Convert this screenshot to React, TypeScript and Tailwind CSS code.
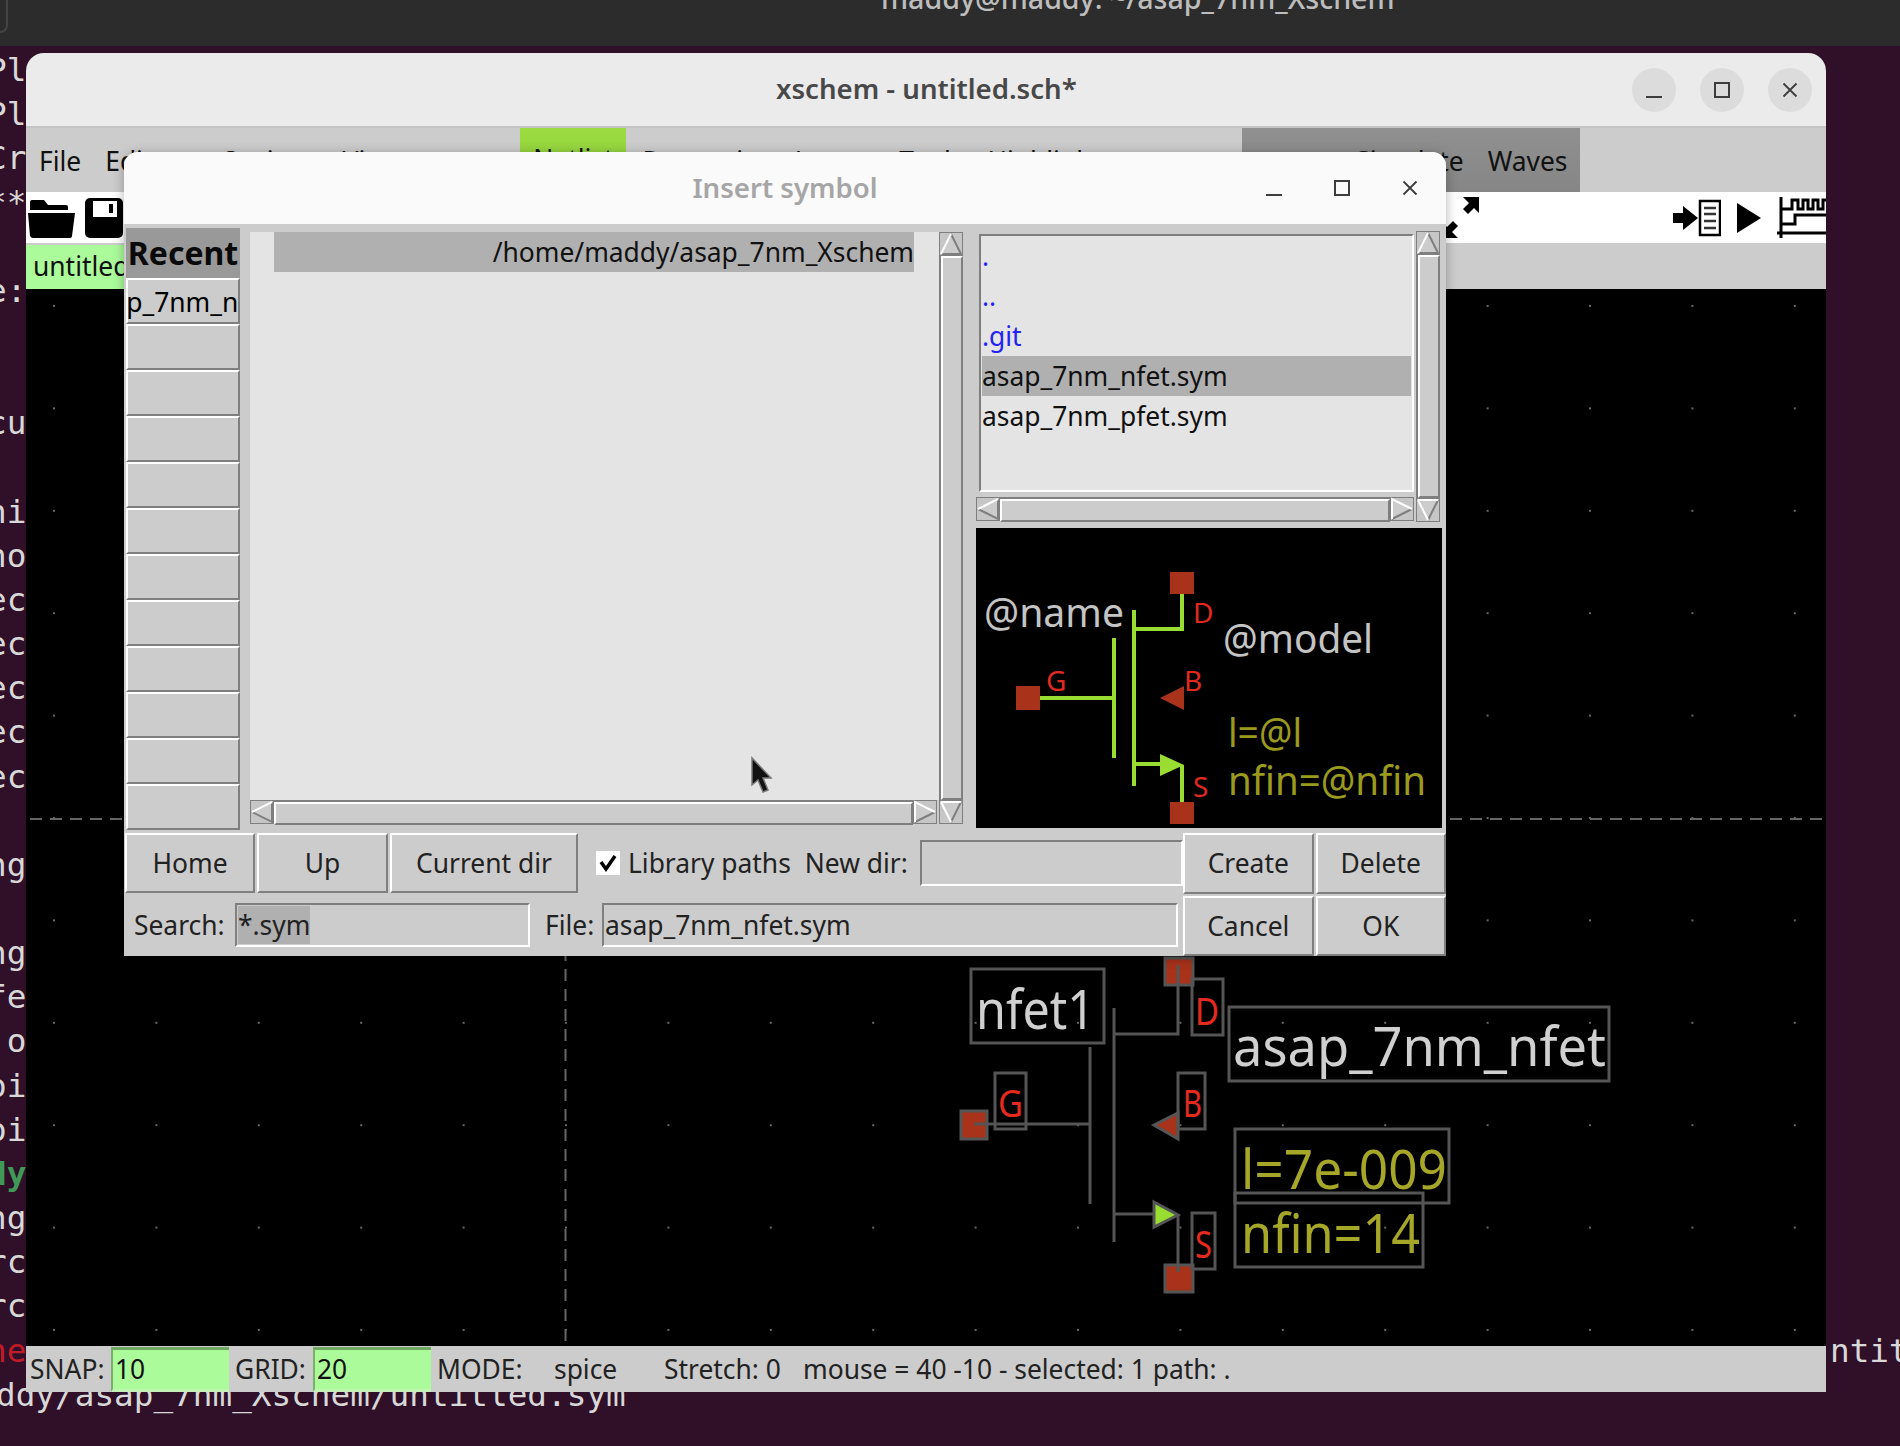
const raised = 'border-2 border-t-white border-l-white border-r-[#7f7f7f] border-b-[#7f7f7f]'
const sunken = 'border-2 border-t-[#7f7f7f] border-l-[#7f7f7f] border-r-white border-b-white'
const sans = 'font-["Noto_Sans",sans-serif]'

const terminalLines = [
  'Pl', 'Pl', 'Cr', '**', '', 'e:', '', '', 'cu', '', 'hi', 'no', 'ec', 'ec', 'ec', 'ec', 'ec', '',
  'ng', '', 'ng', 'fe', ' o', 'oi', 'oi', 'dy', 'ng', 'rc', 'rc', 'ne',
]

function Terminal() {
  return (
    <div className="pt-[2px] font-['DejaVu_Sans_Mono',monospace] text-[32.7px] leading-[44.16px] whitespace-pre text-[#d8d8d8]">
      {terminalLines.map((line, i) => (
        <div
          key={i}
          className={
            'ml-[-13px] flex h-[44.16px] justify-between ' +
            (line === 'dy' ? 'font-bold text-[#3f9a57]' : line === 'ne' ? 'text-[#c01c28]' : '')
          }
        >
          <span>{line}</span>
          {line === 'ne' && <span className="w-[70px] overflow-hidden text-[#d8d8d8]">ntit</span>}
        </div>
      ))}
      <div className="ml-[-4px] h-[44.16px]">ddy/asap_7nm_Xschem/untitled.sym</div>
    </div>
  )
}

function WinGlyph({ kind }: { kind: 'min' | 'max' | 'close' }) {
  return (
    <svg width="20" height="20" viewBox="0 0 20 20" fill="none" stroke="#3d3d3d" strokeWidth="2">
      {kind === 'min' && <path d="M2 17H18" />}
      {kind === 'max' && <rect x="3" y="3" width="14" height="14" />}
      {kind === 'close' && <path d="M3.5 3.5L16.5 16.5M16.5 3.5L3.5 16.5" strokeWidth="1.8" />}
    </svg>
  )
}

function TitleButton({ kind }: { kind: 'min' | 'max' | 'close' }) {
  return (
    <div className="flex h-[44px] w-[44px] items-center justify-center rounded-full bg-[#dcdcdc]">
      <WinGlyph kind={kind} />
    </div>
  )
}

function Toolbar() {
  return (
    <div className="flex h-[51px] items-center bg-white">
      <svg width="47" height="40" viewBox="0 0 47 40" className="ml-[2px]">
        <path d="M2 12V4q0-2 2-2h12l4 5h18q2 0 2 2v3z" fill="#000" />
        <path d="M0 15H47L44 38q0 2-2 2H5q-2 0-3-2z" fill="#000" />
      </svg>
      <svg width="38" height="40" viewBox="0 0 38 40" className="ml-[10px]">
        <rect x="0" y="0" width="38" height="40" rx="5" fill="#000" />
        <rect x="8" y="3" width="24" height="16" fill="#fff" />
        <rect x="24" y="6" width="4" height="9" fill="#000" />
      </svg>
      <div className="ml-auto flex items-center">
        <svg width="36" height="41" viewBox="0 0 36 41" className="mr-[192px]">
          <path d="M18 0H34V16L29 11L23 17L18 12L24 6z" fill="#000" />
          <path d="M-3 41V25L2 30L8 24L13 29L7 35L13 41z" fill="#000" />
        </svg>
        <svg width="48" height="38" viewBox="0 0 48 38">
          <path d="M0 14H10V7L25 19L10 31V24H0z" fill="#000" />
          <rect x="27" y="2" width="20" height="34" fill="#fff" stroke="#000" strokeWidth="2.5" />
          <path d="M31 9H43M31 15H43M31 22H43M31 29H43" stroke="#333" strokeWidth="2.5" />
        </svg>
        <svg width="24" height="30" viewBox="0 0 24 30" className="ml-[16px]">
          <path d="M0 0L24 15L0 30z" fill="#000" />
        </svg>
        <svg width="49" height="41" viewBox="0 0 49 41" className="ml-[16px]">
          <path
            d="M4 0V41M0 36H49M4 12H15V3H21V12H26V3H31V12H36V3H41V12H46V3H49M4 27H18V18H49"
            fill="none"
            stroke="#000"
            strokeWidth="3"
          />
        </svg>
      </div>
    </div>
  )
}

function MenuBar() {
  return (
    <div className="flex h-[64px] items-center bg-[#cccccc] pl-[13px] text-[#111]">
      <span className="mt-[4px]">File</span>
      <span className="mt-[4px] ml-[24px]">Edit</span>
      <div className="mt-[4px] ml-[68px] flex w-[304px] gap-[24px]">
        <span>Options</span>
        <span>View</span>
      </div>
      <div className="ml-[-4px] flex h-full w-[106px] items-center justify-center bg-gradient-to-b from-[#9cdc42] to-[#8ccc38]">
        Netlist
      </div>
      <div className="mt-[4px] flex w-[616px] gap-[24px] pl-[16px]">
        <span>Properties</span>
        <span>Layers</span>
        <span>Tools</span>
        <span>Highlight</span>
      </div>
      <div className="flex h-full w-[338px] items-center justify-end gap-[24px] bg-gradient-to-b from-[#909090] to-[#868686] pt-[4px] pr-[13px]">
        <span>Simulate</span>
        <span>Waves</span>
      </div>
    </div>
  )
}

function Triangle({ dir }: { dir: 'up' | 'down' | 'left' | 'right' }) {
  const shapes = {
    up: { fill: 'M12 2L22 22H2z', light: 'M2 22L12 2', dark: 'M12 2L22 22H2' },
    down: { fill: 'M12 22L22 2H2z', light: 'M2 2H22M2 2L12 22', dark: 'M12 22L22 2' },
    left: { fill: 'M2 12L22 2V22z', light: 'M2 12L22 2', dark: 'M2 12L22 22V2' },
    right: { fill: 'M22 12L2 2V22z', light: 'M2 22V2L22 12', dark: 'M22 12L2 22' },
  }[dir]
  return (
    <svg width="24" height="24" viewBox="0 0 24 24" className="shrink-0">
      <rect x="0" y="0" width="24" height="24" fill="#c6c6c6" stroke="#7f7f7f" strokeWidth="2" />
      <path d={shapes.fill} fill="#cccccc" />
      <path d={shapes.dark} fill="none" stroke="#7f7f7f" strokeWidth="2" />
      <path d={shapes.light} fill="none" stroke="#fff" strokeWidth="2" />
    </svg>
  )
}

function VScroll() {
  return (
    <div className="flex h-full w-[24px] flex-col">
      <Triangle dir="up" />
      <div className="flex flex-1 border-l-2 border-[#7f7f7f]">
        <div className={'flex-1 bg-[#cccccc] ' + raised} />
      </div>
    </div>
  )
}

function HScroll({ down }: { down?: boolean }) {
  return (
    <div className="flex h-[25px] items-stretch">
      <Triangle dir="left" />
      <div className="flex flex-1 border-t-2 border-[#7f7f7f]">
        <div className={'flex-1 bg-[#cccccc] ' + raised} />
      </div>
      <Triangle dir="right" />
      {down && <div className="w-[2px]" />}
      {down && <Triangle dir="down" />}
    </div>
  )
}

function FileRow({ name, dir, selected }: { name: string; dir?: boolean; selected?: boolean }) {
  return (
    <div
      className={
        'mr-[1px] flex h-[40px] items-center ' +
        (selected ? 'bg-[#b0b0b0] ' : '') +
        (dir ? 'text-[#2222f4]' : 'text-[#111]')
      }
    >
      {name}
    </div>
  )
}

function Preview() {
  return (
    <div className="h-[300px] bg-black">
      <svg width="466" height="300" viewBox="976 528 466 300">
        <g stroke="#99dd33" strokeWidth="4" fill="none">
          <path d="M1182 594V629H1134M1134 610V786M1114 638V758M1040 698H1114M1134 764H1170M1182 765V802" />
        </g>
        <path d="M1160 754L1184 765L1160 776z" fill="#99dd33" />
        <rect x="1170" y="572" width="24" height="22" fill="#a8321a" />
        <rect x="1016" y="686" width="24" height="24" fill="#a8321a" />
        <rect x="1170" y="802" width="24" height="22" fill="#a8321a" />
        <path d="M1160 698L1184 686V710z" fill="#a8321a" />
        <g fontFamily="'Noto Sans',sans-serif">
          <text x="984" y="627" fontSize="40" fill="#c4c4c4" textLength="140" lengthAdjust="spacingAndGlyphs">@name</text>
          <text x="1223" y="653" fontSize="40" fill="#c4c4c4" textLength="150" lengthAdjust="spacingAndGlyphs">@model</text>
          <text x="1228" y="747" fontSize="40" fill="#9a9a1e" textLength="74" lengthAdjust="spacingAndGlyphs">l=@l</text>
          <text x="1228" y="795" fontSize="40" fill="#9a9a1e" textLength="198" lengthAdjust="spacingAndGlyphs">nfin=@nfin</text>
          <text x="1193" y="623" fontSize="28" fill="#e02a1e">D</text>
          <text x="1046" y="691" fontSize="28" fill="#e02a1e">G</text>
          <text x="1184" y="691" fontSize="28" fill="#e02a1e">B</text>
          <text x="1193" y="797" fontSize="28" fill="#e02a1e">S</text>
        </g>
      </svg>
    </div>
  )
}

function Dialog() {
  return (
    <div className={'absolute top-[99px] left-[98px] flex h-[804px] w-[1322px] flex-col overflow-hidden rounded-t-[14px] bg-[#cccccc] shadow-[0_2px_12px_rgba(0,0,0,0.3)] ' + sans}>
      <div className="relative flex h-[72px] items-center justify-center bg-[#fafafa]">
        <span className="text-[27.6px] font-semibold text-[#a6a6a6]">Insert symbol</span>
        <div className="absolute top-[26px] right-[26px] flex gap-[48px]">
          <WinGlyph kind="min" />
          <WinGlyph kind="max" />
          <WinGlyph kind="close" />
        </div>
      </div>

      <div className="flex h-[609px] text-[26.4px] leading-none">
        <div className="mt-[4px] ml-[2px] flex w-[114px] flex-col">
          <div className="flex h-[50px] items-center justify-center bg-[#999999] text-[32px] font-bold text-[#0a0a0a]">Recent</div>
          <div className={'flex h-[46px] items-center overflow-hidden pt-[3px] whitespace-nowrap ' + raised}>
            <span className="ml-[-44px]">asap_7nm_nfet</span>
          </div>
          {Array.from({ length: 11 }).map((_, i) => (
            <div key={i} className={'h-[46px] ' + raised} />
          ))}
        </div>

        <div className="mt-[8px] ml-[10px] flex w-[713px] flex-col">
          <div className="flex h-[568px]">
            <div className="w-[689px] bg-[#e4e4e4]">
              <div className="ml-[24px] flex h-[40px] w-[640px] items-center justify-end bg-[#b0b0b0] text-[#111]">
                /home/maddy/asap_7nm_Xschem
              </div>
            </div>
            <VScroll />
          </div>
          <HScroll down />
        </div>

        <div className="mt-[7px] ml-[13px] flex w-[466px] flex-col">
          <div className="flex h-[291px]">
            <div className="w-[438px]">
              <div className={'mt-[3px] ml-[3px] h-[258px] bg-[#e4e4e4] pl-[1px] ' + sunken}>
                <FileRow name="." dir />
                <FileRow name=".." dir />
                <FileRow name=".git" dir />
                <FileRow name="asap_7nm_nfet.sym" selected />
                <FileRow name="asap_7nm_pfet.sym" />
              </div>
              <div className="mt-[5px]">
                <HScroll />
              </div>
            </div>
            <div className="ml-[2px] flex flex-col">
              <div className="min-h-0 flex-1">
                <VScroll />
              </div>
              <Triangle dir="down" />
            </div>
          </div>
          <div className="mt-[6px]">
            <Preview />
          </div>
        </div>
      </div>

      <div className="ml-[1px] flex flex-1 text-[26.4px] leading-none text-[#222]">
        <div className="flex w-[1058px] flex-col">
          <div className="flex h-[60px] items-center">
            <button className={'h-[60px] w-[130px] ' + raised}>Home</button>
            <button className={'ml-[2px] h-[60px] w-[131px] ' + raised}>Up</button>
            <button className={'ml-[2px] h-[60px] w-[188px] ' + raised}>Current dir</button>
            <div className="ml-[18px] flex h-[24px] w-[24px] items-center justify-center bg-white">
              <svg width="18" height="18" viewBox="0 0 18 18">
                <path d="M2 8L7 15L16 2" fill="none" stroke="#000" strokeWidth="3.5" />
              </svg>
            </div>
            <span className="ml-[8px]">Library paths</span>
            <span className="ml-[14px]">New dir:</span>
            <div className={'ml-[12px] h-[46px] flex-1 ' + sunken} />
          </div>
          <div className="mt-[10px] flex h-[44px] items-center">
            <span className="ml-[9px] w-[101px]">Search:</span>
            <div className={'flex h-[44px] w-[295px] items-center pl-[1px] ' + sunken}>
              <span className="flex h-[38px] items-center bg-[#b0b0b0]">*.sym</span>
            </div>
            <span className="ml-[15px] w-[57px]">File:</span>
            <div className={'flex h-[44px] w-[576px] items-center pl-[1px] ' + sunken}>asap_7nm_nfet.sym</div>
          </div>
        </div>
        <div className="grid flex-1 grid-cols-2 grid-rows-2 gap-[2px]">
          <button className={raised}>Create</button>
          <button className={raised}>Delete</button>
          <button className={raised}>Cancel</button>
          <button className={raised}>OK</button>
        </div>
      </div>

      <svg width="24" height="38" viewBox="0 0 24 38" className="absolute top-[604px] left-[626px]">
        <path d="M2 2V29L8 24L13 36L18 34L13 22H21z" fill="#111" stroke="#777" strokeWidth="1.5" />
      </svg>
    </div>
  )
}

function Canvas() {
  const dotsX = Array.from({ length: 18 }).map((_, i) => 53 + i * 102.4)
  const dotsY = Array.from({ length: 11 }).map((_, i) => 305 + i * 102.4)
  return (
    <div className="relative h-[1057px] bg-black">
      <svg width="1800" height="1057" viewBox="26 289 1800 1057" className="absolute inset-0">
        {dotsX.map((x) =>
          dotsY.map((y) => <rect key={x + '-' + y} x={x} y={y} width="2" height="2" fill="#666" />),
        )}
        <path d="M30 819H1826M565.5 289V1346" stroke="#666" strokeWidth="2" strokeDasharray="12 8" />

        <path d="M1154 1202L1178 1215L1154 1227z" fill="#99dd33" />
        <path d="M1154 1125L1178 1113V1139z" fill="#a8321a" />
        <rect x="1165" y="958" width="28" height="27" fill="#a8321a" />
        <rect x="961" y="1111" width="26" height="28" fill="#a8321a" />
        <rect x="1165" y="1265" width="28" height="27" fill="#a8321a" />

        <g fill="none" stroke="#555" strokeWidth="3">
          <rect x="1165" y="958" width="28" height="27" />
          <rect x="961" y="1111" width="26" height="28" />
          <rect x="1165" y="1265" width="28" height="27" />
          <path d="M1154 1202L1178 1215L1154 1227zM1154 1125L1178 1113V1139z" />
          <path d="M1178 965V1034H1114M1114 1008V1242M1090 1047V1204M974 1124H1090M1114 1214H1154M1178 1215V1272" />
          <rect x="971" y="969" width="133" height="74" />
          <rect x="1192" y="979" width="31" height="56" />
          <rect x="1229" y="1007" width="380" height="74" />
          <rect x="995" y="1073" width="31" height="56" />
          <rect x="1178" y="1073" width="27" height="56" />
          <rect x="1192" y="1213" width="23" height="56" />
          <rect x="1235" y="1129" width="214" height="74" />
          <rect x="1235" y="1193" width="188" height="74" />
        </g>

        <g fontFamily="'Noto Sans',sans-serif">
          <text x="976" y="1029" fontSize="54" fill="#d0d0d0" textLength="119" lengthAdjust="spacingAndGlyphs">nfet1</text>
          <text x="1233" y="1066" fontSize="54" fill="#d0d0d0" textLength="373" lengthAdjust="spacingAndGlyphs">asap_7nm_nfet</text>
          <text x="1241" y="1189" fontSize="54" fill="#a6a628" textLength="206" lengthAdjust="spacingAndGlyphs">l=7e-009</text>
          <text x="1241" y="1253" fontSize="54" fill="#a6a628" textLength="179" lengthAdjust="spacingAndGlyphs">nfin=14</text>
          <text x="1195" y="1025" fontSize="38" fill="#e62a1e" textLength="24" lengthAdjust="spacingAndGlyphs">D</text>
          <text x="998" y="1117" fontSize="38" fill="#e62a1e" textLength="25" lengthAdjust="spacingAndGlyphs">G</text>
          <text x="1183" y="1117" fontSize="38" fill="#e62a1e" textLength="19" lengthAdjust="spacingAndGlyphs">B</text>
          <text x="1195" y="1258" fontSize="38" fill="#e62a1e" textLength="17" lengthAdjust="spacingAndGlyphs">S</text>
        </g>
      </svg>
    </div>
  )
}

function StatusBar() {
  const entry = 'flex h-[45px] w-[118px] items-center border-t-[3px] border-b-[3px] border-l-[2px] border-t-[#6fa860] border-b-[#c2f2b4] border-l-[#7cae6c] bg-[#abfb9b] pl-[2px] text-[#111]'
  return (
    <div className="flex h-[46px] items-center bg-[#cccccc] pt-[1px] text-[26.4px] whitespace-nowrap text-[#222]">
      <span className="ml-[4px] w-[81px]">SNAP:</span>
      <div className={entry}>10</div>
      <span className="ml-[6px] w-[78px]">GRID:</span>
      <div className={entry}>20</div>
      <span className="ml-[6px] w-[117px]">MODE:</span>
      <span className="w-[110px]">spice</span>
      <span className="w-[139px]">Stretch: 0</span>
      <span>mouse = 40 -10 - selected: 1 path: .</span>
    </div>
  )
}

export default function App() {
  return (
    <div className="relative h-[1446px] w-[1900px] overflow-hidden bg-[#300f28]">
      <div className="relative h-[46px] overflow-hidden bg-[#2c2c2c]">
        <div className="absolute top-[-8px] left-[-10px] h-[41px] w-[18px] rounded-br-[8px] border-r-2 border-b-2 border-[#444]" />
        <div className={'absolute top-[-23px] left-[881px] text-[28.6px] font-medium whitespace-nowrap text-[#bdbdbd] ' + sans}>
          maddy@maddy: ~/asap_7nm_Xschem
        </div>
      </div>

      <Terminal />

      <div className={'absolute top-[53px] left-[26px] w-[1800px] text-[26.4px] ' + sans}>
        <div className="flex h-[73px] items-center rounded-t-[18px] bg-[#ebebeb]">
          <span className="mb-[2px] ml-[750px] text-[27.6px] font-semibold text-[#484848]">xschem - untitled.sch*</span>
          <div className="mr-[14px] ml-auto flex gap-[24px]">
            <TitleButton kind="min" />
            <TitleButton kind="max" />
            <TitleButton kind="close" />
          </div>
        </div>
        <div className="h-[2px] bg-[#c4c4c4]" />
        <MenuBar />
        <Toolbar />
        <div className="flex h-[46px] items-end bg-[#cccccc]">
          <div className="flex h-[44px] w-[100px] items-center overflow-hidden bg-[#abfb9b] pl-[7px] text-[#111]">untitled</div>
        </div>
        <Canvas />
        <StatusBar />
        <Dialog />
      </div>
    </div>
  )
}
